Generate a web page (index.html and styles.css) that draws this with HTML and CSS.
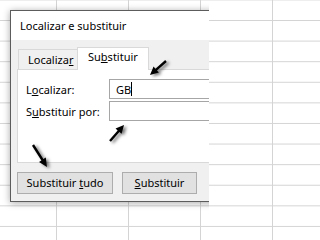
FILE: index.html
```html
<!DOCTYPE html>
<html lang="pt">
<head>
<meta charset="utf-8">
<title>Localizar e substituir</title>
<link rel="stylesheet" href="styles.css">
</head>
<body>
<div class="dialog">
  <div class="titlebar">Localizar e substituir</div>
  <div class="content">
    <div class="tabs">
      <div class="tab">Localiza<u>r</u></div>
      <div class="tab active">Su<u>b</u>stituir</div>
    </div>
    <div class="panel">
      <div class="row">
        <span class="label">L<u>o</u>calizar:</span>
        <div class="field">GB<span class="caret"></span></div>
      </div>
      <div class="row">
        <span class="label">S<u>u</u>bstituir por:</span>
        <div class="field"></div>
      </div>
    </div>
    <div class="buttons">
      <div class="btn btn-all">Substituir <u>t</u>udo</div>
      <div class="btn btn-one"><u>S</u>ubstituir</div>
    </div>
  </div>
</div>
<svg class="arrows" width="209" height="215" viewBox="0 0 209 215">
  <defs>
    <filter id="sh" x="-50%" y="-50%" width="200%" height="200%">
      <feDropShadow dx="2.5" dy="1.5" stdDeviation="1.6" flood-color="#000" flood-opacity="0.55"/>
    </filter>
  </defs>
  <g filter="url(#sh)" fill="#000">
    <g transform="translate(166 61) rotate(138.8)">
      <path d="M0,-1.2 L13,-1.2 L13,-4 L21.3,0 L13,4 L13,1.2 L0,1.2 Z"/>
    </g>
    <g transform="translate(110 141) rotate(-48.8)">
      <path d="M0,-1.2 L13,-1.2 L13,-4 L21.3,0 L13,4 L13,1.2 L0,1.2 Z"/>
    </g>
    <g transform="translate(33 145) rotate(57.5)">
      <path d="M0,-1.2 L17.5,-1.2 L17.5,-4 L26,0 L17.5,4 L17.5,1.2 L0,1.2 Z"/>
    </g>
  </g>
</svg>
</body>
</html>
```
FILE: styles.css
```css
html, body {
  margin: 0;
  padding: 0;
}
body {
  width: 209px;
  height: 215px;
  overflow: hidden;
  position: relative;
  font-family: "Noto Sans", "Open Sans", sans-serif;
  font-size: 11px;
  color: #000;
  background-color: #fff;
  background-image:
    linear-gradient(to right, #d4d4d4 1px, transparent 1px),
    linear-gradient(to bottom, #d4d4d4 1px, transparent 1px);
  background-size: 72px 100%, 100% 20.6px;
  background-position: 56px 0, 0 20px;
}
.dialog {
  box-sizing: border-box;
  margin: 10px 0 0 10px;
  width: 240px;
  height: 192px;
  border: 1px solid #5c5c5c;
  background: #f0f0f0;
  box-shadow: 0 1px 7px rgba(0, 0, 0, 0.35);
  display: flex;
  flex-direction: column;
}
.titlebar {
  height: 29px;
  line-height: 30px;
  background: #fff;
  padding-left: 9px;
  white-space: nowrap;
}
.content {
  flex: 1;
  display: flex;
  flex-direction: column;
}
.tabs {
  display: flex;
  align-items: flex-end;
  padding: 7px 0 0 7px;
  height: 22px;
  position: relative;
  z-index: 1;
}
.tab {
  box-sizing: border-box;
  height: 20px;
  width: 59px;
  padding-left: 9px;
  line-height: 20px;
  border: 1px solid #d9d9d9;
  border-right: none;
  border-bottom: none;
  white-space: nowrap;
}
.tab.active {
  height: 23px;
  width: 72px;
  padding-left: 10px;
  line-height: 18px;
  background: #fff;
  border-right: 1px solid #d9d9d9;
  margin-bottom: -1px;
}
.panel {
  box-sizing: border-box;
  margin-left: 6px;
  height: 94px;
  border: 1px solid #d9d9d9;
  background: #fff;
  padding: 9px 0 0 8px;
  display: flex;
  flex-direction: column;
  gap: 2px;
}
.row {
  display: flex;
  align-items: center;
  height: 20px;
}
.label {
  width: 83px;
  white-space: nowrap;
}
.field {
  box-sizing: border-box;
  flex: 1;
  height: 20px;
  border: 1px solid #a6a6a6;
  background: #fff;
  padding-left: 6px;
  line-height: 17px;
  display: flex;
  align-items: center;
}
.caret {
  display: inline-block;
  width: 1px;
  height: 14px;
  background: #000;
}
.buttons {
  display: flex;
  gap: 9px;
  margin: 9px 0 0 6px;
}
.btn {
  box-sizing: border-box;
  height: 22px;
  line-height: 20px;
  border: 1px solid #adadad;
  background: #e1e1e1;
  text-align: center;
  white-space: nowrap;
}
.btn-all {
  width: 96px;
}
.btn-one {
  width: 75px;
}
.arrows {
  position: absolute;
  left: 0;
  top: 0;
  pointer-events: none;
}
```
